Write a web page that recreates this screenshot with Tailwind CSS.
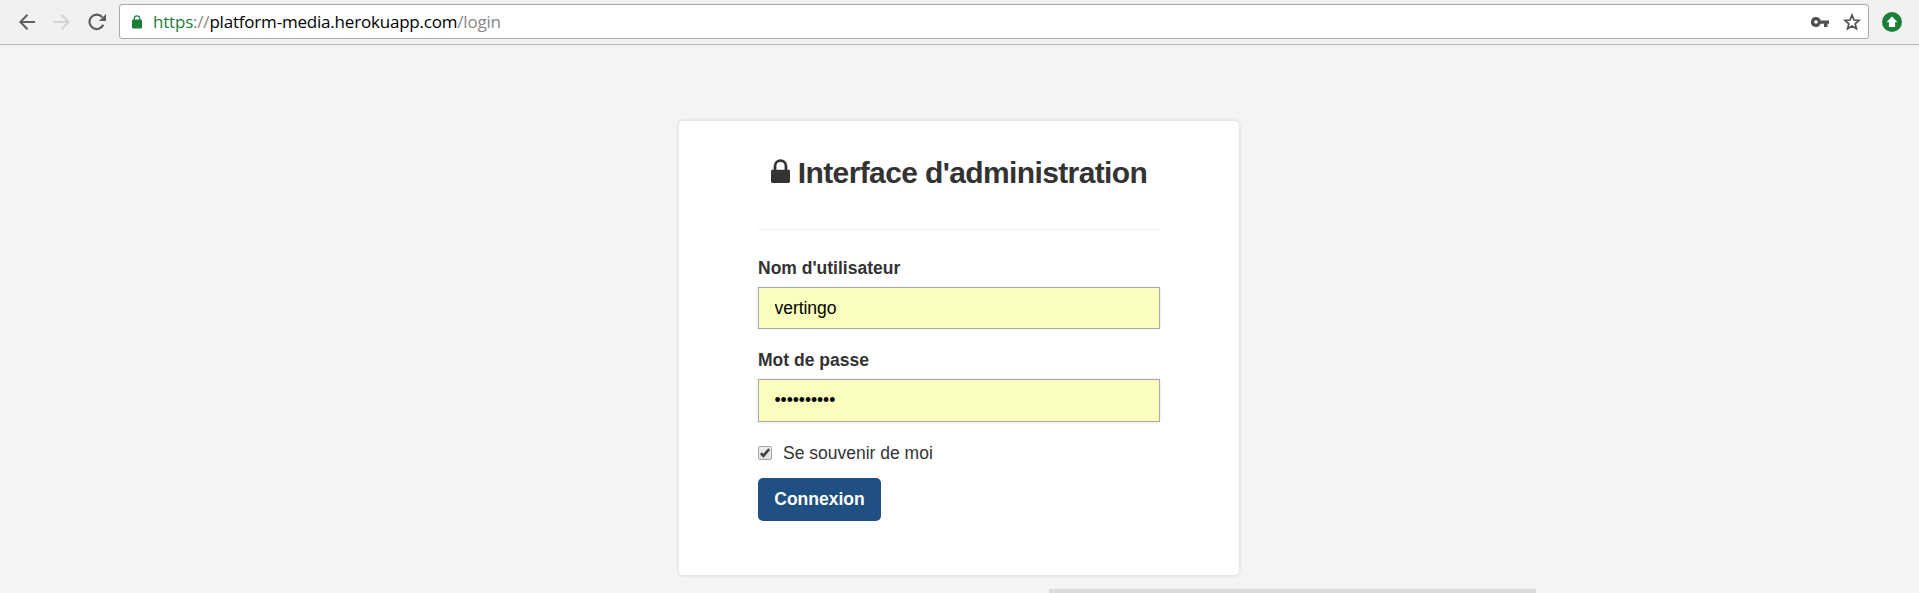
<!DOCTYPE html>
<html lang="fr">
<head>
<meta charset="utf-8">
<title>Interface d'administration</title>
<script src="https://cdn.jsdelivr.net/npm/@tailwindcss/browser@4"></script>
</head>
<body class="h-[593px] overflow-hidden bg-[#f4f4f4] font-['Liberation_Sans',sans-serif] text-[17.5px] text-[#333]">
<header class="flex h-[45px] items-start border-b border-[#b6b4b6] bg-[#f1f1f1] pt-1">
  <svg class="ml-[19px] mt-[10px] h-4 w-4 shrink-0" viewBox="0 0 16 16" fill="none" stroke="#5a5d61" stroke-width="2"><path d="M16 8H1.5M8.5 .8 1.3 8l7.200 7.200"/></svg>
  <svg class="ml-[19px] mt-[10px] h-4 w-4 shrink-0" viewBox="0 0 16 16" fill="none" stroke="#d2d4d5" stroke-width="2"><path d="M0 8h14.500M7.500 .8 14.700 8l-7.200 7.200"/></svg>
  <svg class="ml-[18px] mt-[9px] h-[18px] w-[19px] shrink-0" viewBox="0 0 19 18" fill="none" stroke="#5a5d61" stroke-width="2.200"><path d="M15.300 11.800A7.200 7.200 0 1 1 14.200 4.200"/><path d="M18 1v7h-7z" fill="#5a5d61" stroke="none"/></svg>
  <div class="ml-3 flex h-[35px] w-[1750px] shrink-0 items-center rounded-[3px] border border-[#a8a8a8] bg-white">
    <svg class="ml-3 h-[14px] w-[10px]" viewBox="0 0 10 14"><rect y="4.500" width="10" height="9" rx="1" fill="#1a8038"/><path d="M2.300 5V3.500a2.700 2.700 0 0 1 5.400 0V5" fill="none" stroke="#1a8038" stroke-width="1.300"/></svg>
    <div class="ml-[11px] w-[348px] whitespace-nowrap font-['Open_Sans','Noto_Sans',sans-serif] text-[17px] leading-6 tracking-[-0.2px] text-black"><span class="text-[#1a8038]">https</span><span class="text-[#888]">://</span>platform-media.herokuapp.com<span class="text-[#888]">/login</span></div>
    <svg class="ml-auto h-[10px] w-[18px]" viewBox="0 0 18 10"><path fill="#505050" fill-rule="evenodd" d="M5 0a5 5 0 1 0 4.600 6.800H13V10h3.500V6.800H18V3.400H9.700A5 5 0 0 0 5 0zm0 3.200a1.800 1.800 0 1 1 0 3.600 1.800 1.800 0 0 1 0-3.600z"/></svg>
    <svg class="ml-[14px] mr-[7px] h-[18px] w-[18px]" viewBox="0 0 18 18" fill="none" stroke="#505050" stroke-width="1.700"><path d="M9 2.200l2 4.800 5.100.4-3.900 3.400 1.200 5L9 13.100l-4.400 2.700 1.200-5L1.900 7.400 7 7z"/></svg>
  </div>
  <svg class="ml-[13px] mt-2 h-5 w-5 shrink-0" viewBox="0 0 20 20"><circle cx="10" cy="10" r="10" fill="#1a8038"/><path d="M10 4.500l5.500 5.800h-2.400V15H6.900v-4.700H4.500z" fill="#fff"/></svg>
</header>
<main class="flex h-[548px] flex-col items-start">
  <form class="ml-[678px] mt-[75px] flex h-[456px] w-[562px] shrink-0 flex-col items-start rounded-[5px] border border-[#e8e8e8] bg-white px-[79px] shadow-[0_0_3px_rgba(0,0,0,0.12)]">
    <h1 class="flex h-[108px] w-full items-start justify-center pt-[34px] text-[30px] font-bold leading-9 tracking-[-0.62px]">
      <svg class="mr-[8px] mt-1 h-6 w-[19px]" viewBox="0 0 19 24"><path d="M4 12V7.200a5.500 5.500 0 0 1 11 0V12" fill="none" stroke="#333" stroke-width="2.800"/><rect y="10.800" width="19" height="13.200" rx="1.400" fill="#333"/></svg><span>Interface d'administration</span>
    </h1>
    <div class="h-px w-full bg-[#eee]"></div>
    <label class="mt-[28px] h-[29px] font-bold leading-5" for="u">Nom d'utilisateur</label>
    <input id="u" value="vertingo" class="h-[42px] w-[402px] border border-[#aaa] bg-[#faffbd] px-[15.5px] tracking-[-0.05px] text-black shadow-[0_0_3px_rgba(0,0,0,0.12)]">
    <label class="mt-[21px] h-[29px] font-bold leading-5" for="p">Mot de passe</label>
    <input id="p" type="password" value="vertingo12" class="h-[43px] w-[402px] border border-[#aaa] bg-[#faffbd] px-[15.5px] tracking-[-0.05px] text-black shadow-[0_0_3px_rgba(0,0,0,0.12)]">
    <label class="mt-[21px] flex h-5 items-center leading-5"><span class="mr-[11px] flex h-[14px] w-[14px] items-center justify-center rounded-[2px] border border-[#a8a8a8] bg-linear-to-b from-[#eee] to-[#dedede]"><svg class="h-[10px] w-[10px]" viewBox="0 0 10 10" fill="none" stroke="#3f3f3f" stroke-width="2.600"><path d="M.8 5.300l2.600 2.500L9.200 1"/></svg></span>Se souvenir de moi</label>
    <button type="button" class="mt-[15px] h-[43px] w-[123px] rounded-[5px] bg-[#205081] font-bold text-white">Connexion</button>
  </form>
  <div class="ml-[1049px] mt-[13px] h-1 w-[487px] bg-[#dcdcdc]"></div>
</main>
</body>
</html>
